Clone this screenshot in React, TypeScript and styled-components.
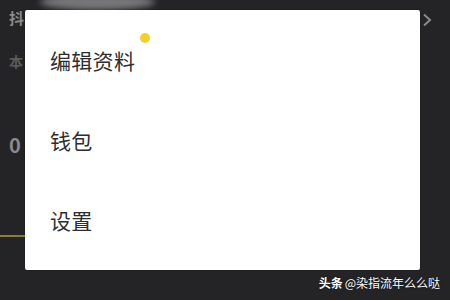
import styled, { createGlobalStyle } from 'styled-components'

const Global = createGlobalStyle`
  html, body {
    margin: 0;
    padding: 0;
    background: #242427;
  }
  body {
    font-family: "Noto Sans CJK SC", "Noto Sans", sans-serif;
  }
`

const Screen = styled.div`
  position: relative;
  width: 450px;
  height: 300px;
  overflow: hidden;
  background: #242427;
`

const Behind = styled.div`
  display: flex;
  flex-direction: column;
  padding: 9px 0 0 9px;
  width: 40px;
  color: #7d7d80;
`

const Faint = styled.span<{ $size: number; $color: string; $mt: number }>`
  margin-top: ${(p) => p.$mt}px;
  font-size: ${(p) => p.$size}px;
  line-height: 1.2;
  color: ${(p) => p.$color};
  font-weight: 600;
`

const GoldLine = styled.div`
  margin: 78px 0 0 -9px;
  width: 30px;
  height: 2px;
  background: #8c7b34;
`

const TopBlur = styled.div`
  position: absolute;
  left: 40px;
  top: -6px;
  width: 115px;
  height: 16px;
  border-radius: 50%;
  background: #9a9a9c;
  filter: blur(3px);
  opacity: 0.7;
`

const Chevron = styled.svg`
  position: absolute;
  right: 18px;
  top: 13px;
`

const Menu = styled.div`
  position: absolute;
  left: 25px;
  top: 10px;
  width: 395px;
  height: 260px;
  box-sizing: border-box;
  padding: 10px 0 0 25px;
  background: #ffffff;
  border-radius: 2px;
  box-shadow: 0 0 2px rgba(0, 0, 0, 0.4);
  display: flex;
  flex-direction: column;
`

const MenuItem = styled.div`
  height: 80px;
  display: flex;
  align-items: center;
  font-size: 21px;
  color: #2e2e2e;
  letter-spacing: 0.3px;
`

const Dot = styled.span`
  position: absolute;
  left: 115px;
  top: 23px;
  width: 10px;
  height: 10px;
  border-radius: 50%;
  background: #f5cf2a;
`

const Watermark = styled.div`
  position: absolute;
  right: 10px;
  bottom: 9px;
  font-size: 12px;
  color: #ffffff;
  display: flex;
  gap: 2px;
  text-shadow: 0 0 2px rgba(0, 0, 0, 0.6);
`

const Brand = styled.span`
  font-weight: 700;
`

export default function App() {
  return (
    <Screen>
      <Global />
      <Behind>
        <Faint $size={15} $color="#8a8a8d" $mt={0}>抖</Faint>
        <Faint $size={14} $color="#5a5a5d" $mt={26}>本</Faint>
        <Faint $size={20} $color="#8a8a8d" $mt={63}>0</Faint>
        <GoldLine />
      </Behind>
      <TopBlur />
      <Chevron width="10" height="14" viewBox="0 0 10 14">
        <path d="M2 1.5 L8 7 L2 12.5" fill="none" stroke="#8a8a8d" strokeWidth="2" />
      </Chevron>
      <Menu>
        <Dot />
        <MenuItem>编辑资料</MenuItem>
        <MenuItem>钱包</MenuItem>
        <MenuItem>设置</MenuItem>
      </Menu>
      <Watermark>
        <Brand>头条</Brand>
        <span>@染指流年么么哒</span>
      </Watermark>
    </Screen>
  )
}
